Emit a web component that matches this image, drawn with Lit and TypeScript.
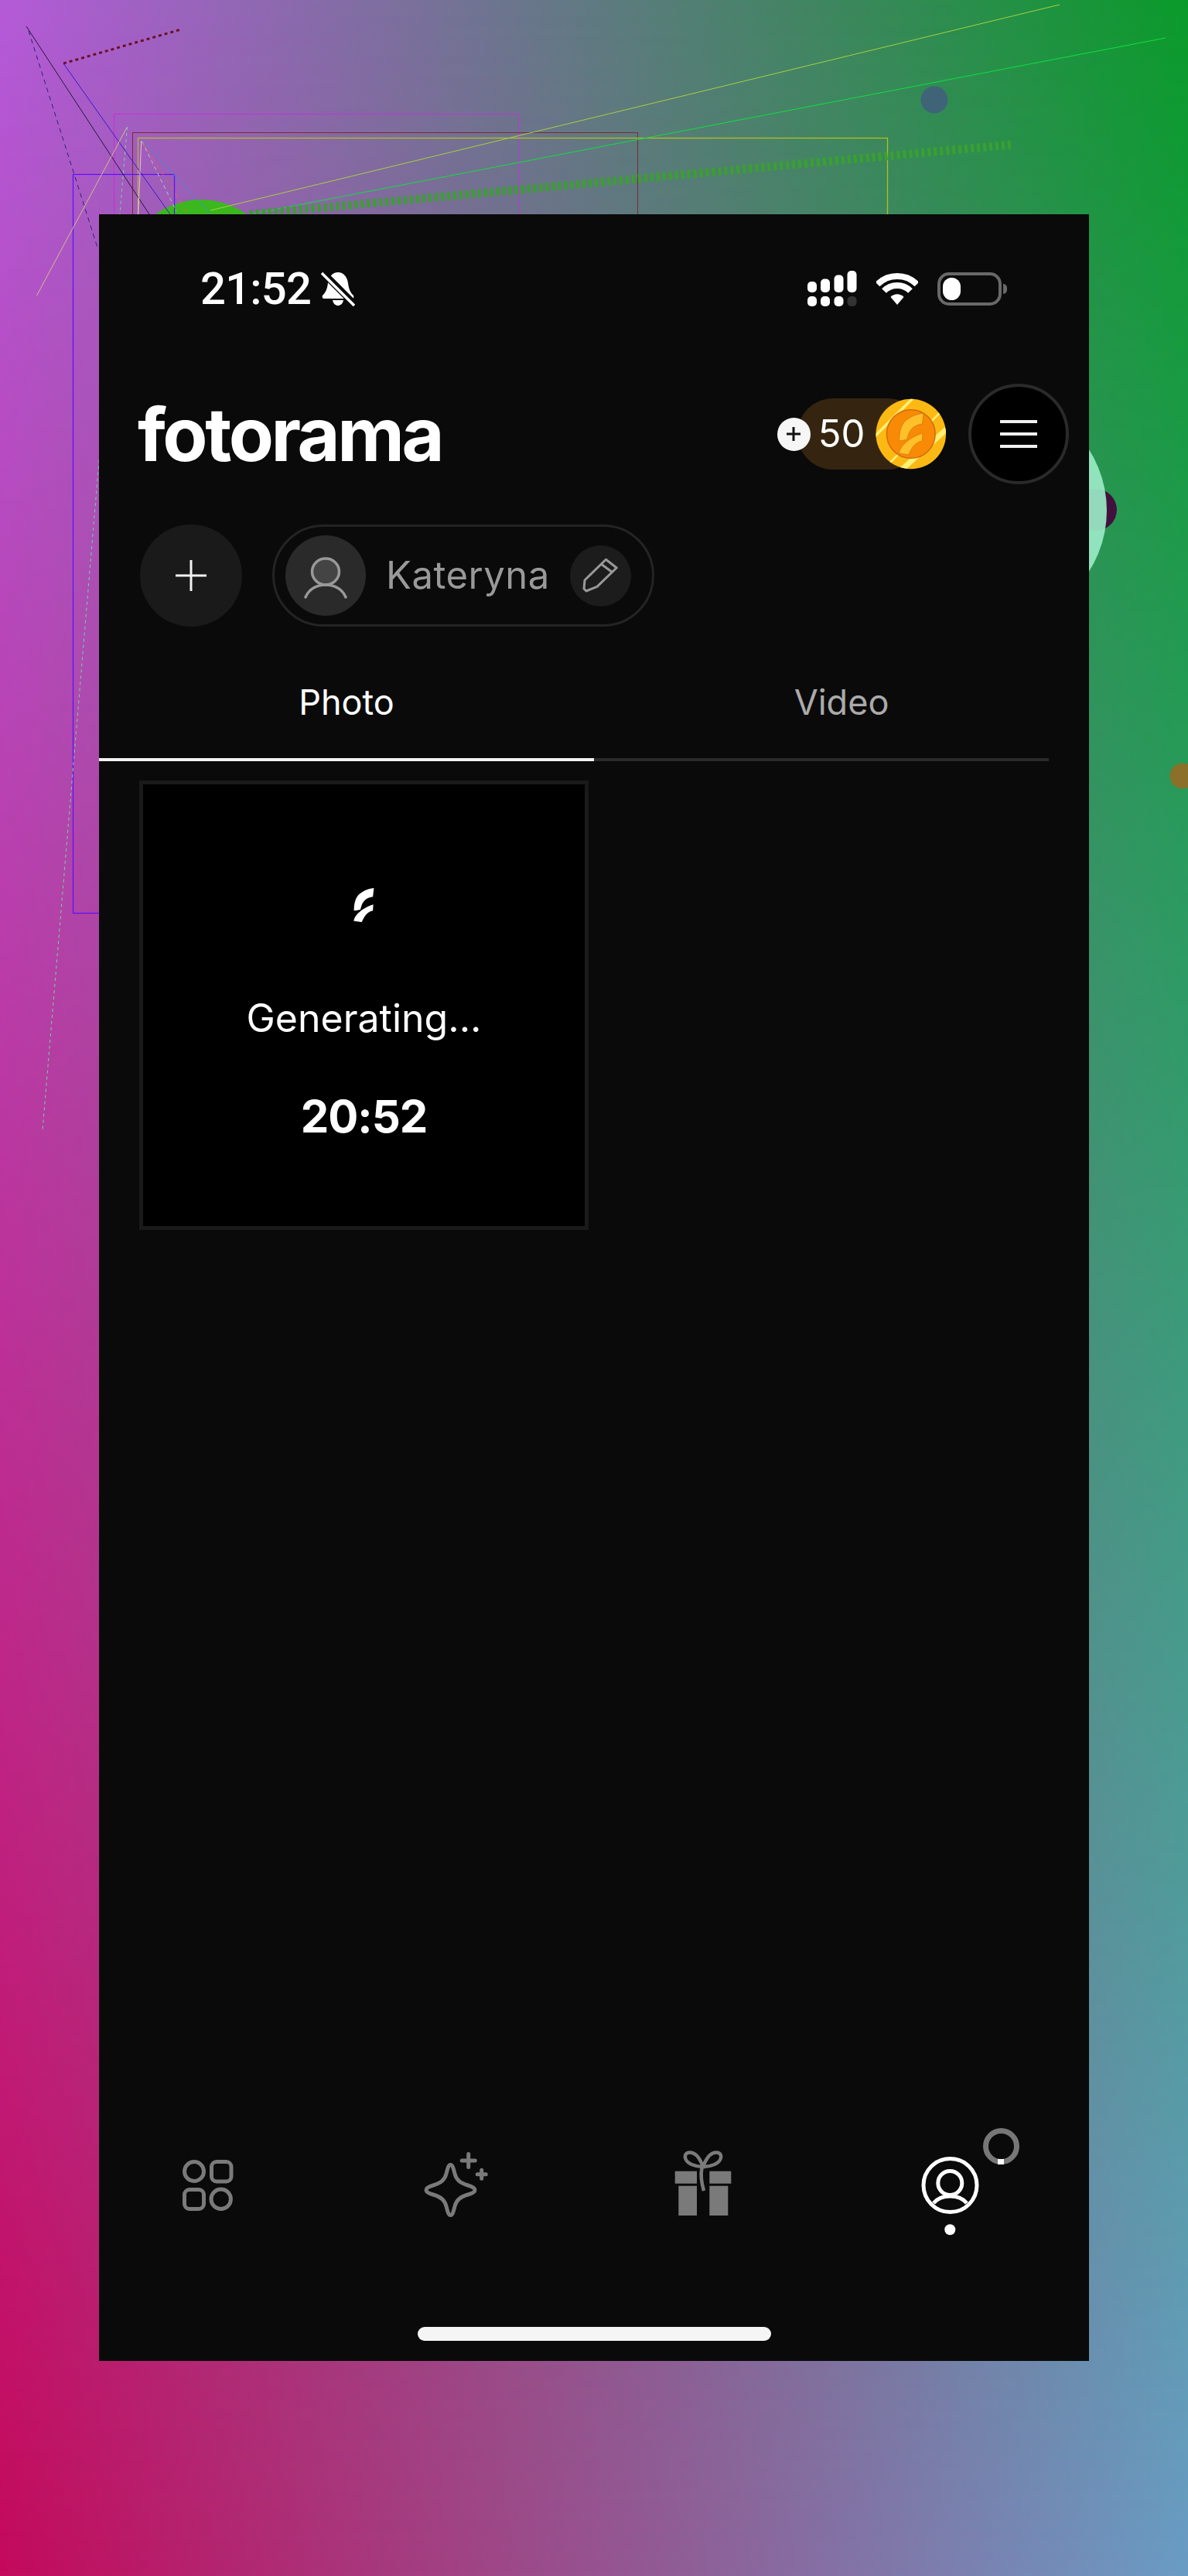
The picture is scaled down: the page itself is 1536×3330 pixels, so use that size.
import { LitElement, html, css } from "lit";
import { customElement } from "lit/decorators.js";

const F_TOP = "M30.8 55 C30.8 44 33 36 37 31 C42 25 51 20.5 62.3 19 L60.7 33 C56 33.5 52.5 35 49 37.5 C45 40.5 42.5 46 41 53 C38 54 34 54.5 30.8 55 Z";
const F_LOW = "M30.3 71 C31.5 66 34 62 38 58.3 C43 53.5 51 48 61.3 45 L60.7 55 C57 55.8 54.5 57 52 59 C49 61.5 46 66 43 73 Z";

@customElement("app-root")
export class AppRoot extends LitElement {
  static styles = css`
    :host {
      display: block;
      position: relative;
      width: 1536px;
      height: 3330px;
      overflow: hidden;
      background: linear-gradient(to right, #c40a5c, #6a9cc4);
      font-family: Inter, "Noto Sans", sans-serif;
      color: #fff;
    }
    .top-wash {
      position: absolute;
      inset: 0;
      background: linear-gradient(to right, #b45ad8, #0a9a2a);
      -webkit-mask-image: linear-gradient(to bottom, #000, transparent);
      mask-image: linear-gradient(to bottom, #000, transparent);
    }
    .canvas { position: absolute; left: 0; top: 0; }
    .stage {
      position: relative;
      padding: 277px 128px 278px;
      box-sizing: border-box;
      height: 3330px;
    }
    .phone {
      width: 1280px;
      height: 2775px;
      background: #0a0a0a;
      display: flex;
      flex-direction: column;
    }
    .status {
      display: flex;
      align-items: center;
      height: 48px;
      margin-top: 72px;
      padding-left: 131px;
    }
    .time {
      font-family: Roboto, sans-serif;
      font-weight: 500;
      font-size: 58px;
      line-height: 48px;
      letter-spacing: -0.8px;
      width: 156px;
    }
    .status-right {
      display: flex;
      align-items: center;
      margin-left: auto;
      margin-right: 113px;
      gap: 25px;
    }
    .signal { display: block; }
    .battery {
      position: relative;
      box-sizing: border-box;
      width: 83px;
      height: 43px;
      border: 4px solid #686868;
      border-radius: 15px;
      padding: 3px;
      display: flex;
    }
    .battery-fill { width: 23px; background: #fff; border-radius: 12px; }
    .battery-nub {
      position: absolute;
      left: 81px;
      top: 11px;
      width: 5px;
      height: 13px;
      background: #686868;
      border-radius: 0 6px 6px 0;
    }
    .header {
      display: flex;
      align-items: center;
      height: 130px;
      margin-top: 99px;
      padding: 0 26px 0 50px;
    }
    .logo {
      font-weight: 700;
      font-size: 95px;
      line-height: 130px;
      letter-spacing: -3.4px;
      position: relative;
      top: 1px;
    }
    .coins {
      margin-left: auto;
      margin-right: 28px;
      display: flex;
      align-items: center;
      position: relative;
      height: 92px;
      width: 219px;
    }
    .coins-bg {
      position: absolute;
      left: 26px;
      right: 30px;
      top: 0;
      bottom: 0;
      background: #352510;
      border-radius: 46px;
    }
    .coin-plus {
      position: relative;
      width: 43px;
      height: 43px;
      border-radius: 50%;
      background: #f6f6f6;
      display: flex;
      align-items: center;
      justify-content: center;
    }
    .coin-count {
      position: relative;
      font-size: 49px;
      line-height: 92px;
      margin-left: 10px;
      width: 75px;
      letter-spacing: 0;
    }
    .coin { position: relative; display: block; }
    .menu {
      box-sizing: border-box;
      width: 130px;
      height: 130px;
      border-radius: 50%;
      background: #000;
      border: 4px solid #2a2a2a;
      display: flex;
      flex-direction: column;
      align-items: center;
      justify-content: center;
      gap: 12px;
    }
    .menu span { display: block; width: 48px; height: 4px; background: #f0f0f0; }
    .actions {
      display: flex;
      gap: 39px;
      margin-top: 52px;
      padding-left: 53px;
    }
    .add {
      width: 132px;
      height: 132px;
      border-radius: 50%;
      background: #1a1a1a;
      display: flex;
      align-items: center;
      justify-content: center;
    }
    .name-pill {
      box-sizing: border-box;
      width: 494px;
      height: 132px;
      border: 3px solid #242424;
      border-radius: 66px;
      display: flex;
      align-items: center;
      padding-left: 14px;
    }
    .avatar {
      width: 104px;
      height: 104px;
      border-radius: 50%;
      background: #2a2a2a;
      flex: none;
    }
    .name {
      margin-left: 26px;
      font-size: 49px;
      line-height: 60px;
      color: #999;
      letter-spacing: 0.5px;
      width: 238px;
      flex: none;
    }
    .edit {
      width: 79px;
      height: 79px;
      border-radius: 50%;
      background: #1c1c1c;
      flex: none;
    }
    .tabs { display: grid; grid-template-columns: 640px 640px; }
    .tab {
      text-align: center;
      font-size: 45px;
      line-height: 60px;
      padding-top: 68px;
      height: 170px;
      box-sizing: border-box;
    }
    .tab.off { color: #aaa; }
    .rule { display: flex; height: 4px; }
    .rule .on { width: 640px; background: #f2f2f2; }
    .rule .rest { width: 588px; background: #2a2a2a; }
    .card {
      box-sizing: border-box;
      width: 581px;
      height: 581px;
      margin: 25px 0 0 52px;
      background: #000;
      border: 5px solid #1a1a1a;
      display: flex;
      flex-direction: column;
      align-items: center;
    }
    .mark { display: block; margin-top: 133px; }
    .gen {
      font-size: 50px;
      line-height: 60px;
      margin-top: 93px;
      letter-spacing: 0;
    }
    .count {
      font-size: 58px;
      font-weight: 700;
      line-height: 70px;
      margin-top: 62px;
      letter-spacing: -1px;
    }
    .nav {
      display: flex;
      gap: 220px;
      margin-top: auto;
      padding-left: 91px;
      height: 160px;
    }
    .nav-item { position: relative; width: 100px; height: 160px; }
    .nav-item svg { display: block; }
    .spin { position: absolute; left: 92px; top: 11px; }
    .home {
      width: 457px;
      height: 18px;
      margin: 108px 0 26px 412px;
      background: #f5f5f5;
      border-radius: 9px;
      flex: none;
    }
  `;

  private canvas() {
    return html`<svg class="canvas" width="1536" height="3330" viewBox="0 0 1536 3330" fill="none">
      <circle cx="260" cy="359" r="101" fill="#3ab81e" />
      <circle cx="1208" cy="129" r="17.5" fill="#3f6478" />
      <circle cx="1417" cy="659" r="27" fill="#42103f" />
      <circle cx="1284.5" cy="660" r="146.5" fill="#99e9c6" fill-opacity=".925" />
      <circle cx="1529" cy="1003" r="16.5" fill="#8a7028" />
      <rect x="147.5" y="147.5" width="523" height="300" stroke="#c430d8" />
      <rect x="171.5" y="171.5" width="653" height="300" stroke="#7a2a30" />
      <rect x="178.5" y="178.5" width="969" height="300" stroke="#b0c020" stroke-width="1.3" />
      <rect x="94.5" y="225.5" width="131" height="955" stroke="#5a10ff" stroke-width="1.2" />
      <line x1="34" y1="34" x2="193" y2="277" stroke="#20183a" />
      <line x1="37" y1="40" x2="127" y2="323" stroke="#1a2a70" stroke-dasharray="6 5" />
      <line x1="82" y1="82" x2="234" y2="38" stroke="#6a1028" stroke-width="3" stroke-dasharray="4 4" />
      <line x1="82" y1="82" x2="220" y2="277" stroke="#3a18c8" />
      <line x1="164.5" y1="164" x2="47.5" y2="382" stroke="#d0c088" />
      <line x1="164.5" y1="164" x2="55" y2="1461" stroke="#70d8a0" stroke-dasharray="4 4" />
      <line x1="182.7" y1="182" x2="178.8" y2="277" stroke="#e8c0d0" />
      <line x1="183.7" y1="183" x2="228" y2="273" stroke="#b8c0d0" stroke-dasharray="5 4" />
      <line x1="185" y1="185" x2="242" y2="275" stroke="#e06840" stroke-dasharray="6 5" />
      <line x1="185" y1="183" x2="273" y2="277" stroke="#4090c8" />
      <line x1="272" y1="272" x2="1370" y2="6" stroke="#a8d040" />
      <line x1="323" y1="277" x2="1507" y2="49" stroke="#10e040" />
      <line x1="323" y1="277" x2="1307" y2="187" stroke="#3aa030" stroke-width="11" stroke-dasharray="4 4" />
    </svg>`;
  }

  private coin() {
    return html`<svg class="coin" width="92" height="92" viewBox="0 0 92 92">
      <defs><clipPath id="coinclip"><circle cx="46" cy="46" r="45.5" /></clipPath></defs>
      <circle cx="46" cy="46" r="45.5" fill="#fdb913" />
      <g clip-path="url(#coinclip)">
        <path d="M62 96 A52 52 0 0 0 96 44" stroke="#c0501a" stroke-width="5" fill="none" />
        <line x1="-2" y1="50" x2="50" y2="-2" stroke="#fff176" stroke-width="3.5" />
        <line x1="30" y1="96" x2="92" y2="40" stroke="#fff176" stroke-width="7" />
        <line x1="14" y1="88" x2="84" y2="18" stroke="#fff176" stroke-width="2.5" />
      </g>
      <circle cx="46" cy="46" r="31.5" fill="#f98a05" stroke="#d06a14" stroke-width="1.5" />
      <path d=${F_TOP} fill="#ffc02a" stroke="#c96a14" stroke-width=".6" />
      <path d=${F_LOW} fill="#ffc02a" stroke="#c96a14" stroke-width=".6" />
    </svg>`;
  }

  render() {
    return html`
      <div class="top-wash"></div>
      ${this.canvas()}
      <div class="stage">
        <div class="phone">
          <div class="status">
            <div class="time">21:52</div>
            <svg width="44" height="46" viewBox="0 0 44 46">
              <path d="M22 2 C29 2 34 8 35 16 C36 24 38 28 42 32 C43 34 42 36 40 36 L4 36 C2 36 1 34 2 32 C6 28 8 24 9 16 C10 8 15 2 22 2 Z" fill="#fff" />
              <path d="M15 38 H29 C28 43 25 45 22 45 C19 45 16 43 15 38 Z" fill="#fff" />
              <line x1="2" y1="2" x2="44" y2="44" stroke="#0a0a0a" stroke-width="9" />
              <line x1="1" y1="3" x2="43" y2="45" stroke="#fff" stroke-width="3.5" />
            </svg>
            <div class="status-right">
              <svg class="signal" width="64" height="46" viewBox="0 0 64 46">
                <rect x="0" y="14" width="12" height="14" rx="5" fill="#fff" />
                <rect x="17" y="10.5" width="12" height="17.5" rx="5" fill="#fff" />
                <rect x="34.5" y="5.5" width="12" height="22.5" rx="5" fill="#fff" />
                <rect x="51.5" y="0" width="12" height="28" rx="5" fill="#fff" />
                <rect x="0" y="33" width="12" height="13" rx="5" fill="#fff" />
                <rect x="17" y="33" width="12" height="13" rx="5" fill="#fff" />
                <rect x="34.5" y="33" width="12" height="13" rx="5" fill="#fff" />
                <rect x="51.5" y="33" width="12" height="13" rx="5" fill="#333" />
              </svg>
              <svg width="54" height="42" viewBox="0 0 54 42">
                <path d="M1.5 15.5 A36 36 0 0 1 52.5 15.5" stroke="#fff" stroke-width="8" fill="none" />
                <path d="M10 24 A24 24 0 0 1 44 24" stroke="#fff" stroke-width="8" fill="none" />
                <path d="M27 42 L18.5 32 C23 27 31 27 35.5 32 Z" fill="#fff" />
              </svg>
              <div class="battery">
                <div class="battery-fill"></div>
                <div class="battery-nub"></div>
              </div>
            </div>
          </div>

          <div class="header">
            <div class="logo">fotorama</div>
            <div class="coins">
              <div class="coins-bg"></div>
              <div class="coin-plus">
                <svg width="22" height="22" viewBox="0 0 22 22"><path d="M11 2 V20 M2 11 H20" stroke="#111" stroke-width="3" /></svg>
              </div>
              <div class="coin-count">50</div>
              ${this.coin()}
            </div>
            <div class="menu"><span></span><span></span><span></span></div>
          </div>

          <div class="actions">
            <div class="add">
              <svg width="40" height="40" viewBox="0 0 40 40"><path d="M20 0 V40 M0 20 H40" stroke="#f2f2f2" stroke-width="3" /></svg>
            </div>
            <div class="name-pill">
              <div class="avatar">
                <svg width="104" height="104" viewBox="0 0 104 104" fill="none">
                  <ellipse cx="52" cy="47" rx="17.5" ry="17" fill="#444" stroke="#999" stroke-width="3.5" />
                  <path d="M26 80 C30 70 40 64 52 64 C64 64 74 70 78 80" stroke="#999" stroke-width="3.5" stroke-linecap="round" />
                </svg>
              </div>
              <div class="name">Kateryna</div>
              <div class="edit">
                <svg width="79" height="79" viewBox="0 0 79 79" fill="none" stroke="#999" stroke-width="3" stroke-linejoin="round">
                  <path d="M18 56 L19 45 L46.4 18.3 L60.2 29 L35 53.3 L21 59 Z" />
                  <path d="M40 24 L55 35" />
                </svg>
              </div>
            </div>
          </div>

          <div class="tabs">
            <div class="tab">Photo</div>
            <div class="tab off">Video</div>
          </div>
          <div class="rule"><div class="on"></div><div class="rest"></div></div>

          <div class="card">
            <svg class="mark" width="27" height="46" viewBox="30 19 33 54">
              <path d=${F_TOP} fill="#fff" />
              <path d=${F_LOW} fill="#fff" />
            </svg>
            <div class="gen">Generating...</div>
            <div class="count">20:52</div>
          </div>

          <div class="nav">
            <div class="nav-item">
              <svg width="100" height="160" viewBox="0 0 100 160" fill="none" stroke="#7a7a7a" stroke-width="5">
                <circle cx="32" cy="67" r="12.5" />
                <rect x="54.5" y="54.5" width="25.5" height="25.5" rx="6.5" />
                <rect x="19.5" y="90.5" width="25" height="25" rx="6.5" />
                <circle cx="66.7" cy="102.7" r="12.7" />
              </svg>
            </div>
            <div class="nav-item">
              <svg width="100" height="160" viewBox="0 0 100 160" fill="none" stroke="#7a7a7a" stroke-width="5" stroke-linecap="round">
                <path d="M43.5 58.5 C46 58.5 47 62 49 70 C51 78 56 82 66 85 C73 87 75 89 75 91 C75 93 73 95 66 97 C56 100 51 104 49 112 C47 120 46 123.5 43.5 123.5 C41 123.5 40 120 38 112 C36 104 31 100 21 97 C14 95 12 93 12 91 C12 89 14 87 21 85 C31 82 36 78 38 70 C40 62 41 58.5 43.5 58.5 Z" />
                <path d="M66.7 44.5 V61.5 M58.2 53 H75.2" />
                <path d="M83.7 65.2 V76.2 M78.2 70.7 H89.2" />
              </svg>
            </div>
            <div class="nav-item">
              <svg width="100" height="160" viewBox="0 0 100 160" fill="none">
                <rect x="13.7" y="66.7" width="28.3" height="16" fill="#7a7a7a" />
                <rect x="58.3" y="66.7" width="28" height="16" fill="#7a7a7a" />
                <rect x="18.3" y="85.7" width="23.7" height="38.3" fill="#7a7a7a" />
                <rect x="58.3" y="85.7" width="24" height="38.3" fill="#7a7a7a" />
                <g stroke="#7a7a7a" stroke-width="4.5">
                  <path d="M50 61 C46 50 40 42.5 33 42.5 C27 42.5 26 47 27.5 51 C30 57 40 61 50 61 Z" />
                  <path d="M50 61 C54 50 60 42.5 67 42.5 C73 42.5 74 47 72.5 51 C70 57 60 61 50 61 Z" />
                  <path d="M48.5 62 C46.5 72 48 82 51 92" />
                </g>
              </svg>
            </div>
            <div class="nav-item">
              <svg width="100" height="160" viewBox="0 0 100 160" fill="none" stroke="#fff" stroke-width="5">
                <circle cx="49.5" cy="85" r="34.5" />
                <circle cx="49.3" cy="82" r="15.5" />
                <path d="M28 108 C33 102 41 99 49.5 99 C58 99 66 102 71 108" />
                <circle cx="49.3" cy="142.3" r="7" fill="#fff" stroke="none" />
              </svg>
              <svg class="spin" width="47" height="47" viewBox="0 0 47 47" fill="none">
                <circle cx="23.5" cy="23.5" r="20" stroke="#777" stroke-width="7" />
                <rect x="19" y="40" width="8" height="7" fill="#fff" />
              </svg>
            </div>
          </div>
          <div class="home"></div>
        </div>
      </div>
    `;
  }
}
